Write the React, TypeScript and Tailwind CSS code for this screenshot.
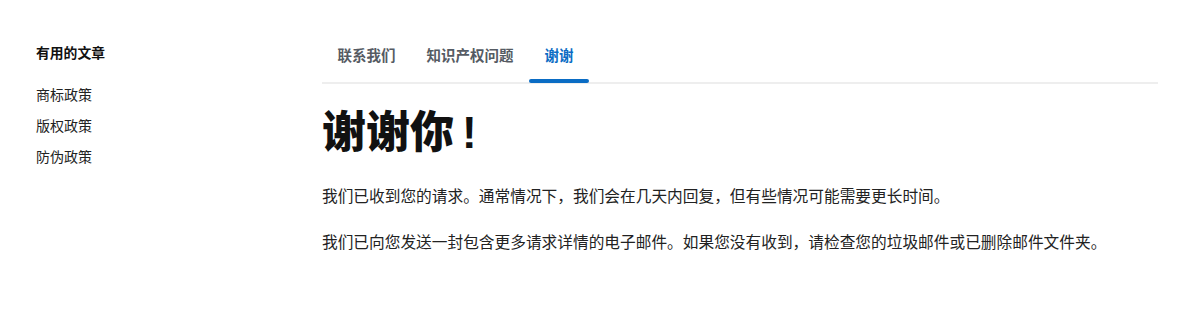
import clsx from 'clsx'

const articles = ['商标政策', '版权政策', '防伪政策']

const tabs = [
  { label: '联系我们', active: false },
  { label: '知识产权问题', active: false },
  { label: '谢谢', active: true }
]

export default function App() {
  return (
    <div
      className="flex min-h-[333px] bg-white pl-[36px] pr-[42px] pt-[44px] text-[#1f1f1f]"
      style={{ fontFamily: '"Liberation Sans", "Noto Sans CJK SC", sans-serif' }}
    >
      <aside className="w-[286px] shrink-0">
        <h3 className="text-[13.8px] font-bold leading-5 text-[#111]">有用的文章</h3>
        <ul className="mt-[21px] flex flex-col gap-[11px]">
          {articles.map(item => (
            <li key={item} className="text-[14px] leading-5 text-[#222]">
              {item}
            </li>
          ))}
        </ul>
      </aside>

      <main className="flex-1">
        <nav className="flex border-b-2 border-[#eeeeee] pt-[2px]">
          {tabs.map(tab => (
            <div
              key={tab.label}
              className={clsx(
                'relative px-[15.5px] pb-4 text-[14.5px] font-semibold leading-5',
                tab.active ? 'text-[#0a6cc4]' : 'text-[#555b63]'
              )}
            >
              {tab.label}
              {tab.active && (
                <span className="absolute -bottom-px left-0 right-0 h-[4px] rounded-full bg-[#0a6cc4]" />
              )}
            </div>
          ))}
        </nav>

        <h1 className="mt-[22px] text-[44px] font-black leading-[53px] text-[#111]">
          谢谢你<span className="ml-[8px]">!</span>
        </h1>

        <p className="mt-[26px] text-[15.7px] leading-6 text-[#222]">
          我们已收到您的请求。通常情况下，我们会在几天内回复，但有些情况可能需要更长时间。
        </p>
        <p className="mt-[22px] text-[15.7px] leading-6 text-[#222]">
          我们已向您发送一封包含更多请求详情的电子邮件。如果您没有收到，请检查您的垃圾邮件或已删除邮件文件夹。
        </p>
      </main>
    </div>
  )
}
